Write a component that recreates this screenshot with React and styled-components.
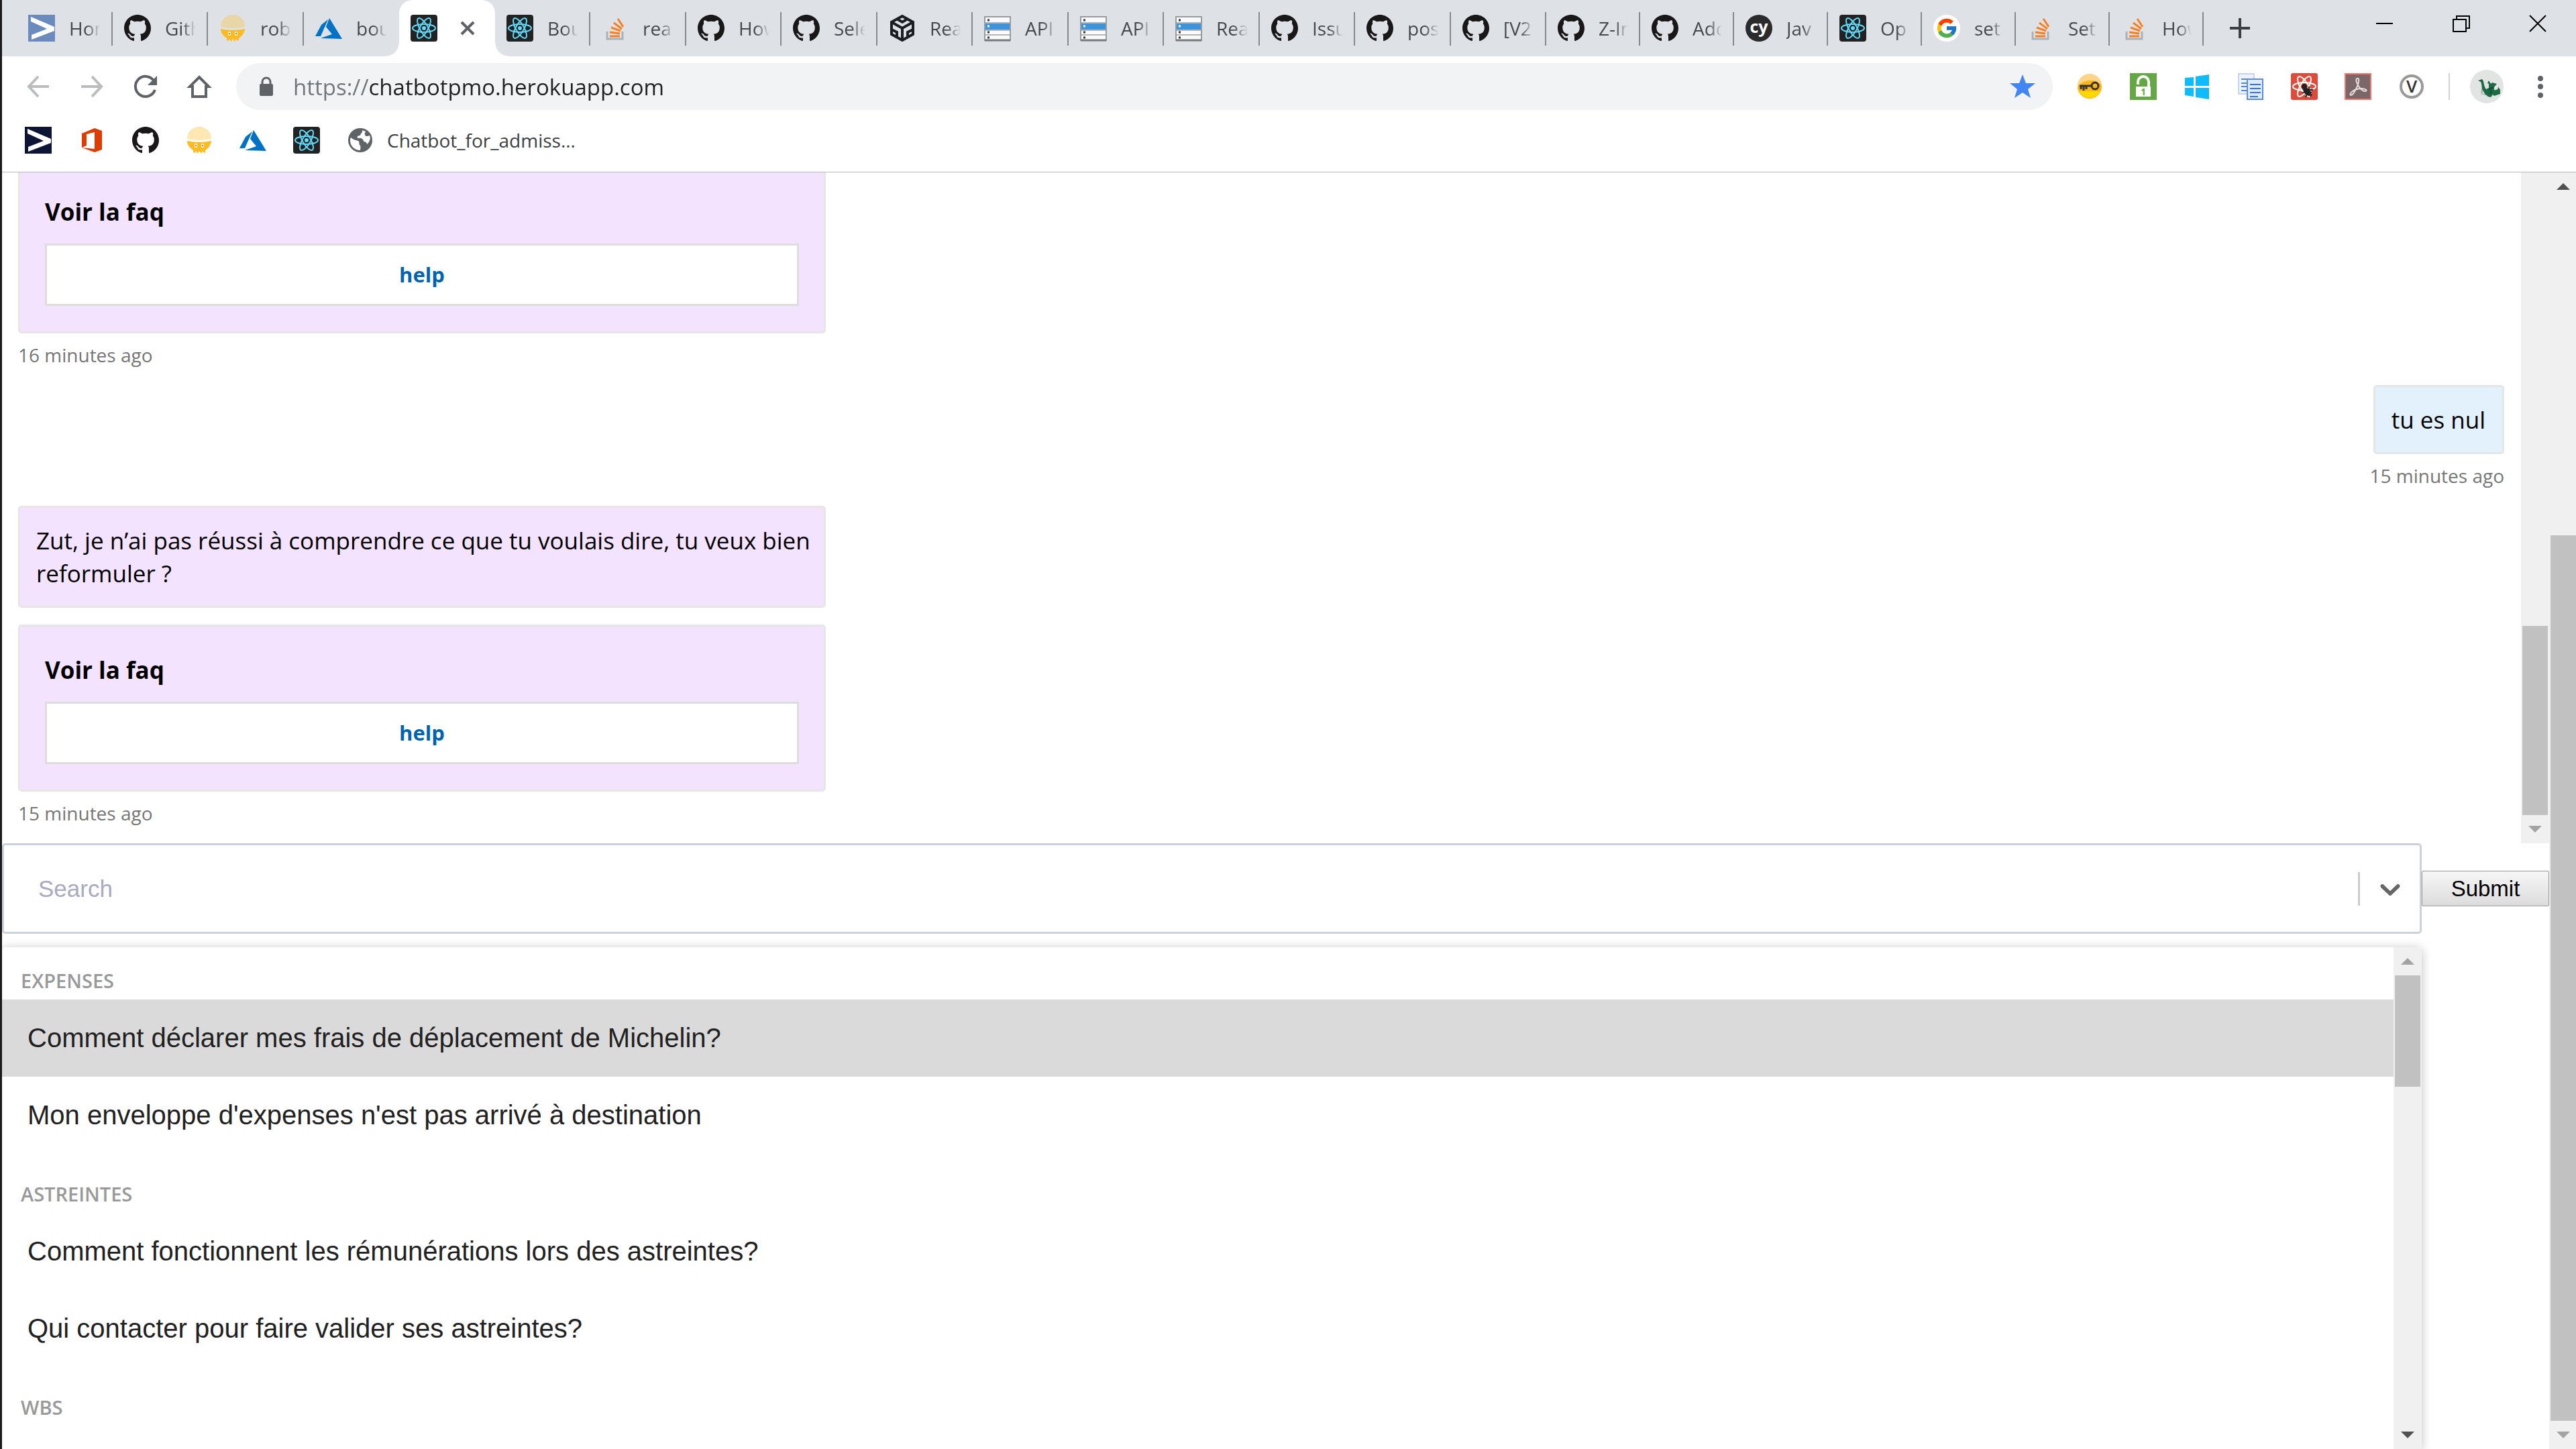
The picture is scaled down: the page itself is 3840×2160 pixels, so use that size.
import { useState } from 'react';
import styled, { createGlobalStyle, css } from 'styled-components';
import { FcGoogle } from 'react-icons/fc';

const GlobalStyle = createGlobalStyle`
  * {
    box-sizing: border-box;
  }
  body {
    margin: 0;
    background: #fff;
    font-family: 'Open Sans', 'Noto Sans', sans-serif;
  }
  button {
    border: 0;
    padding: 0;
    background: none;
    font: inherit;
    color: inherit;
  }
  svg {
    display: block;
    flex: none;
  }
`;

// ---------- icons ----------
const Svg = ({ box = 40, size = 40, children, ...rest }) => (
  <svg width={size} height={size} viewBox={`0 0 ${box} ${box}`} fill='none' aria-hidden='true' {...rest}>
    {children}
  </svg>
);

const ChevronLogo = ({ color = '#6b8bbf' }) => (
  <Svg>
    <rect width='40' height='40' fill={color} />
    <path d='M4 3 L39 18 V24 L5 37 V30 L28 21 L4 10 Z' fill='#fff' />
  </Svg>
);

const GithubIcon = () => (
  <Svg box={16}>
    <path
      fill='#191717'
      d='M8 0C3.58 0 0 3.58 0 8c0 3.54 2.29 6.53 5.47 7.59.4.07.55-.17.55-.38 0-.19-.01-.82-.01-1.49-2.01.37-2.53-.49-2.69-.94-.09-.23-.48-.94-.82-1.13-.28-.15-.68-.52-.01-.53.63-.01 1.08.58 1.23.82.72 1.21 1.87.87 2.33.66.07-.52.28-.87.51-1.07-1.78-.2-3.64-.89-3.64-3.95 0-.87.31-1.59.82-2.15-.08-.2-.36-1.02.08-2.12 0 0 .67-.21 2.2.82.64-.18 1.32-.27 2-.27.68 0 1.36.09 2 .27 1.53-1.04 2.2-.82 2.2-.82.44 1.1.16 1.92.08 2.12.51.56.82 1.27.82 2.15 0 3.07-1.87 3.75-3.65 3.95.29.25.54.73.54 1.48 0 1.07-.01 1.93-.01 2.2 0 .21.15.46.55.38A8.013 8.013 0 0016 8c0-4.42-3.58-8-8-8z'
    />
  </Svg>
);

const RobotIcon = ({ dome = '#e8d6a6' }) => (
  <Svg>
    <path d='M2 18 C2 7 10 0 20 0 S38 7 38 18 Q29 20 20 20 T2 18 Z' fill={dome} />
    <path
      d='M2 21 Q11 23 20 23 T38 21 C37 29 32 33 29 35 V38 L27 39 L25 36 L23 40 L20 36 L17 40 L15 36 L13 39 L11 38 V35 C7 32 2 28 2 21 Z'
      fill='#fdbb22'
    />
    <ellipse cx='15' cy='28' rx='2' ry='3' fill='#fff' />
    <ellipse cx='25' cy='28' rx='2' ry='3' fill='#fff' />
    <circle cx='15' cy='28' r='1' fill='#8a5a00' />
    <circle cx='25' cy='28' r='1' fill='#8a5a00' />
  </Svg>
);

const AzureIcon = () => (
  <Svg>
    <path d='M19 7 L9 15 L0 32 H8 Z' fill='#0072c6' />
    <path d='M21 5 L16 18 L25 29 L8 35 L40 36 Z' fill='#0072c6' />
  </Svg>
);

const Orbits = ({ color, width = 2 }) => (
  <g stroke={color} strokeWidth={width}>
    <ellipse cx='20' cy='20' rx='17' ry='6' />
    <ellipse cx='20' cy='20' rx='17' ry='6' transform='rotate(60 20 20)' />
    <ellipse cx='20' cy='20' rx='17' ry='6' transform='rotate(120 20 20)' />
  </g>
);

const ReactIcon = () => (
  <Svg>
    <rect width='40' height='40' rx='4' fill='#222' />
    <Orbits color='#61dafb' />
    <circle cx='20' cy='20' r='3' fill='#61dafb' />
  </Svg>
);

const StackIcon = () => (
  <Svg>
    <path d='M8 25 V36 H31 V25' stroke='#adb1b6' strokeWidth='3' />
    <g stroke='#f48024' strokeWidth='3'>
      <path d='M12 32 H27' />
      <path d='M12 26 L27 28' />
      <path d='M14 19 L28 24' />
      <path d='M18 12 L30 21' />
      <path d='M24 6 L32 18' />
    </g>
  </Svg>
);

// cube with its three faces cut out
const SandboxIcon = () => (
  <Svg>
    <path d='M20 2 L36 11 V29 L20 38 L4 29 V11 Z' stroke='#1b1f23' strokeWidth='4' />
    <path d='M4 11 L20 20 L36 11 M20 20 V38 M12 6 L20 11 L28 6 M4 22 L12 26 V34 M36 22 L28 26 V34' stroke='#1b1f23' strokeWidth='4' />
  </Svg>
);

const ServerIcon = () => (
  <Svg>
    <rect x='1' y='3' width='38' height='35' fill='#fafafa' stroke='#9a9ba0' strokeWidth='2' />
    <rect x='2' y='13' width='36' height='9' fill='#3b94dc' />
    <path d='M2 12 H38 M2 23 H38 M2 30 H38' stroke='#b5b5b8' strokeWidth='2' />
    <path d='M1 38 H39' stroke='#77787c' strokeWidth='3' />
    <path d='M5 8 H8 M5 26 H8 M5 34 H8' stroke='#333' strokeWidth='3' />
    <path d='M5 17 H8' stroke='#fff' strokeWidth='3' />
  </Svg>
);

const CypressIcon = () => (
  <Svg>
    <circle cx='20' cy='20' r='20' fill='#2b2b2c' />
    <text x='20' y='27' fontFamily='Open Sans, sans-serif' fontWeight='700' fontSize='25' textAnchor='middle' fill='#fff'>
      cy
    </text>
  </Svg>
);

const GoogleIcon = () => (
  <GoogleBadge>
    <FcGoogle size={34} />
  </GoogleBadge>
);

const OfficeIcon = () => (
  <Svg>
    <path d='M5 10 L24 2 L35 6 V34 L24 38 L5 31 L24 33 V8 L12 11 V28 L5 31 Z' fill='#e03c00' />
  </Svg>
);

const GlobeIcon = () => (
  <Svg>
    <circle cx='20' cy='20' r='18' fill='#5f6368' />
    <path
      d='M6 16 C10 20 15 20 17 21 C20 23 17 26 20 28 C21 30 20 33 20 35 C11 35 4 28 5 18 Z M23 5 C24 9 20 10 20 13 C16 13 15 15 16 17 C21 16 25 18 25 22 C28 22 30 24 30 26 C34 23 36 17 34 13 C31 14 28 15 27 12 C26 9 28 8 28 7 Z'
      fill='#fff'
    />
  </Svg>
);

const stroke = (color, width = 4) => ({ stroke: color, strokeWidth: width });

const BackIcon = () => (
  <Svg>
    <path d='M36 20 H7 M20 5 L6 20 L20 35' {...stroke('#babcbe')} />
  </Svg>
);
const ForwardIcon = () => (
  <Svg>
    <path d='M4 20 H33 M20 5 L34 20 L20 35' {...stroke('#babcbe')} />
  </Svg>
);
const ReloadIcon = () => (
  <Svg>
    <path d='M32 11 A15 15 0 1 0 34 25' {...stroke('#5f6368')} />
    <path d='M37 4 V18 H23 Z' fill='#5f6368' />
  </Svg>
);
const HomeIcon = () => (
  <Svg>
    <path d='M20 6 L34 20 H30 V35 H10 V20 H6 Z' {...stroke('#5f6368')} />
  </Svg>
);
const LockIcon = () => (
  <Svg>
    <rect x='10' y='16' width='20' height='18' rx='2' fill='#5f6368' />
    <path d='M14 17 V13 A6 6 0 0 1 26 13 V17' {...stroke('#5f6368', 3)} />
  </Svg>
);
const StarIcon = () => (
  <Svg>
    <path d='M20 2 L25 15 L39 15 L28 24 L32 37 L20 29 L8 37 L12 24 L1 15 L15 15 Z' fill='#4285f4' />
  </Svg>
);

const KeyIcon = () => (
  <Svg>
    <circle cx='20' cy='20' r='18' fill='#fbb615' />
    <path d='M2 20 A18 18 0 0 1 38 18 C30 8 12 8 2 20 Z' fill='#fdd58a' />
    <path d='M4 27 H36 A18 18 0 0 1 4 27 Z' fill='#ffd800' />
    <circle cx='28' cy='19' r='5' {...stroke('#333', 3)} />
    <path d='M23 19 H5 M7 19 V24 M11 19 V26 M15 19 V24' {...stroke('#333', 3)} />
  </Svg>
);
const GreenLockIcon = () => (
  <Svg>
    <rect width='40' height='40' fill='#63a844' />
    <path d='M12 17 V13 A8 8 0 0 1 28 13 V21' {...stroke('#fff')} />
    <rect x='9' y='20' width='22' height='15' fill='#fff' />
    <text x='20' y='33' fontFamily='Open Sans, sans-serif' fontWeight='700' fontSize='14' textAnchor='middle' fill='#63a844'>
      1
    </text>
  </Svg>
);
const WindowsIcon = () => (
  <Svg>
    <path d='M2 7 L15 6 V19 H2 Z M18 5 L38 2 V19 H18 Z M2 22 H15 V35 L2 33 Z M18 22 H38 V39 L18 36 Z' fill='#0fbcf9' />
  </Svg>
);
const PagesIcon = () => (
  <Svg>
    <rect x='2' y='1' width='23' height='30' fill='#eef4ff' stroke='#8fb0e6' />
    <path d='M6 9 H18 M6 15 H16 M6 20 H15 M6 26 H15' {...stroke('#4d87d6', 2)} />
    <rect x='15' y='9' width='23' height='30' fill='#dfeaff' stroke='#5b8ce0' strokeWidth='2' />
    <path d='M19 17 H35 M19 23 H35 M19 29 H35 M19 35 H31' {...stroke('#3576d0', 2)} />
  </Svg>
);
const ReactBugIcon = () => (
  <Svg>
    <rect width='40' height='40' rx='3' fill='#de4b3a' />
    <Orbits color='#fff' />
    <circle cx='20' cy='20' r='4' fill='#222' />
    <path d='M19 25 L24 23 L30 29 L27 33 L22 31 Z M17 30 L22 27 M22 36 L24 31 M27 20 V26 M33 25 H28 M29 35 L31 31' fill='#222' stroke='#222' strokeWidth='2' />
  </Svg>
);
const AcrobatIcon = () => (
  <Svg>
    <rect x='1' y='1' width='38' height='38' fill='#7b6668' stroke='#f4756c' strokeWidth='2' />
    <path
      d='M20 8 C16 7 17 13 20 18 C23 23 27 27 31 27 C35 26 31 23 25 23 C18 23 12 26 9 30 C7 34 11 34 14 29 C18 23 22 14 21 9 C21 8 20 8 20 8 Z'
      {...stroke('#e4dfdf', 2)}
    />
  </Svg>
);
const VIcon = () => (
  <Svg>
    <circle cx='20' cy='20' r='16' {...stroke('#999')} />
    <text x='20' y='29' fontFamily='Open Sans, sans-serif' fontWeight='600' fontSize='26' textAnchor='middle' fill='#333'>
      V
    </text>
  </Svg>
);
const DragonAvatar = () => (
  <Svg box={50} size={50}>
    <circle cx='25' cy='25' r='25' fill='#e2e4e3' />
    <path d='M17 26 C21 27 20 33 18 35 L26 38 L18 37 C14 34 18 30 17 26 Z' fill='#a9b5b0' />
    <path
      d='M12 16 L18 14 C21 16 20 24 24 29 L28 27 L28 21 L26 20 L28 16 L31 21 L33 19 L40 21 L36 26 L36 30 C40 31 43 28 42 25 L45 30 V36 L36 39 L34 37 L31 41 L27 40 L22 36 L20 32 C17 28 18 22 16 18 Z'
      fill='#1d6b45'
    />
    <path d='M28 30 L34 26 M30 36 L32 31' {...stroke('#0f4a30', 2)} />
  </Svg>
);
const MenuDots = () => (
  <Svg>
    <g fill='#5f6368'>
      <circle cx='20' cy='8' r='4' />
      <circle cx='20' cy='20' r='4' />
      <circle cx='20' cy='33' r='4' />
    </g>
  </Svg>
);

// ---------- data ----------
const tabs = [
  { title: 'Hom', icon: <ChevronLogo /> },
  { title: 'Gith', icon: <GithubIcon /> },
  { title: 'rob', icon: <RobotIcon /> },
  { title: 'bou', icon: <AzureIcon />, last: true },
  { title: '', icon: <ReactIcon />, active: true },
  { title: 'Bou', icon: <ReactIcon /> },
  { title: 'rea', icon: <StackIcon /> },
  { title: 'How', icon: <GithubIcon /> },
  { title: 'Sele', icon: <GithubIcon /> },
  { title: 'Rea', icon: <SandboxIcon /> },
  { title: 'API', icon: <ServerIcon /> },
  { title: 'API', icon: <ServerIcon /> },
  { title: 'Rea', icon: <ServerIcon /> },
  { title: 'Issu', icon: <GithubIcon /> },
  { title: 'pos', icon: <GithubIcon /> },
  { title: '[V2', icon: <GithubIcon /> },
  { title: 'Z-In', icon: <GithubIcon /> },
  { title: 'Add', icon: <GithubIcon /> },
  { title: 'Jav', icon: <CypressIcon /> },
  { title: 'Op', icon: <ReactIcon /> },
  { title: 'set', icon: <GoogleIcon /> },
  { title: 'Set', icon: <StackIcon /> },
  { title: 'How', icon: <StackIcon /> },
];

const bookmarks = [
  { name: 'Accueil', icon: <ChevronLogo color='#0d1537' /> },
  { name: 'Office', icon: <OfficeIcon /> },
  { name: 'GitHub', icon: <GithubIcon /> },
  { name: 'Robot', icon: <RobotIcon dome='#fee7b3' /> },
  { name: 'Azure', icon: <AzureIcon /> },
  { name: 'React', icon: <ReactIcon /> },
];

const extensions = [
  { name: 'Key', icon: <KeyIcon /> },
  { name: 'Password', icon: <GreenLockIcon /> },
  { name: 'Windows', icon: <WindowsIcon /> },
  { name: 'Pages', icon: <PagesIcon /> },
  { name: 'React tools', icon: <ReactBugIcon /> },
  { name: 'Acrobat', icon: <AcrobatIcon /> },
  { name: 'V', icon: <VIcon /> },
];

const groups = [
  {
    label: 'EXPENSES',
    options: ['Comment déclarer mes frais de déplacement de Michelin?', "Mon enveloppe d'expenses n'est pas arrivé à destination"],
  },
  {
    label: 'ASTREINTES',
    options: ['Comment fonctionnent les rémunérations lors des astreintes?', 'Qui contacter pour faire valider ses astreintes?'],
  },
  { label: 'WBS', options: [] },
];

// ---------- components ----------
function Scrollbar({ before, thumb, after, top = 'none', bottom }) {
  return (
    <Track>
      {top !== 'none' && (
        <ArrowBox>
          <Arrow $up $dark={top === 'dark'} />
        </ArrowBox>
      )}
      <Space $grow={before} />
      <Thumb $grow={thumb} />
      <Space $grow={after} />
      <ArrowBox>
        <Arrow $dark={bottom === 'dark'} />
      </ArrowBox>
    </Track>
  );
}

function Browser() {
  return (
    <header>
      <TabStrip>
        <TabList role='tablist'>
          {tabs.map((tab, index) => (
            <Tab key={index} role='tab' aria-selected={!!tab.active} $active={tab.active} $last={tab.last}>
              {tab.icon}
              {tab.active ? (
                <TabClose>
                  <Svg box={22} size={22}>
                    <path d='M2 2 L20 20 M20 2 L2 20' {...stroke('#5f6368')} />
                  </Svg>
                </TabClose>
              ) : (
                <TabTitle>{tab.title}</TabTitle>
              )}
            </Tab>
          ))}
        </TabList>
        <NewTab aria-label='Nouvel onglet'>
          <Svg box={30} size={30}>
            <path d='M15 0 V30 M0 15 H30' {...stroke('#3c4043')} />
          </Svg>
        </NewTab>
        <WindowButtons>
          <WindowButton aria-label='Réduire'>
            <Svg box={26} size={26}>
              <path d='M0 13 H25' {...stroke('#000', 2)} />
            </Svg>
          </WindowButton>
          <WindowButton aria-label='Restaurer'>
            <Svg box={26} size={26}>
              <path d='M1 7 H20 V25 H1 Z M6 7 V2 H25 V20 H20' {...stroke('#000', 2)} />
            </Svg>
          </WindowButton>
          <WindowButton aria-label='Fermer'>
            <Svg box={26} size={26}>
              <path d='M1 1 L25 25 M25 1 L1 25' {...stroke('#000', 2)} />
            </Svg>
          </WindowButton>
        </WindowButtons>
      </TabStrip>

      <Toolbar>
        <IconRow>
          <IconButton aria-label='Retour'><BackIcon /></IconButton>
          <IconButton aria-label='Avancer'><ForwardIcon /></IconButton>
          <IconButton aria-label='Actualiser'><ReloadIcon /></IconButton>
          <IconButton aria-label='Accueil'><HomeIcon /></IconButton>
        </IconRow>
        <AddressBar>
          <LockIcon />
          <Address aria-label='Adresse' defaultValue='https://chatbotpmo.herokuapp.com' />
          <IconButton aria-label='Favori'><StarIcon /></IconButton>
        </AddressBar>
        <IconRow>
          {extensions.map((ext) => (
            <IconButton key={ext.name} aria-label={ext.name}>{ext.icon}</IconButton>
          ))}
        </IconRow>
        <Profile>
          <IconButton aria-label='Profil'><DragonAvatar /></IconButton>
          <IconButton aria-label='Menu'><MenuDots /></IconButton>
        </Profile>
      </Toolbar>

      <Bookmarks>
        {bookmarks.map((item) => (
          <Bookmark key={item.name} href='#' aria-label={item.name}>{item.icon}</Bookmark>
        ))}
        <Bookmark href='#'>
          <GlobeIcon />
          Chatbot_for_admiss...
        </Bookmark>
      </Bookmarks>
    </header>
  );
}

function FaqCard() {
  return (
    <Card>
      <CardTitle>Voir la faq</CardTitle>
      <CardButton>help</CardButton>
    </Card>
  );
}

function Chat() {
  return (
    <ChatPanel>
      <Messages>
        <Message>
          <FaqCard />
          <Time>16 minutes ago</Time>
        </Message>
        <Message $mine>
          <Bubble $mine>tu es nul</Bubble>
          <Time>15 minutes ago</Time>
        </Message>
        <Message>
          <Stack>
            <Bubble>Zut, je n’ai pas réussi à comprendre ce que tu voulais dire, tu veux bien reformuler ?</Bubble>
            <FaqCard />
          </Stack>
          <Time>15 minutes ago</Time>
        </Message>
      </Messages>
      <Scrollbar before={676} thumb={282} after={0} />
    </ChatPanel>
  );
}

function Faq() {
  const [search, setSearch] = useState('');
  const [focused, setFocused] = useState(groups[0].options[0]);

  return (
    <Form onSubmit={(e) => e.preventDefault()}>
      <Control>
        <SearchInput aria-label='Search' placeholder='Search' value={search} onChange={(e) => setSearch(e.target.value)} />
        <Separator />
        <DropButton type='button' aria-label='Ouvrir'>
          <Svg box={20} size={50}>
            <path
              fill='#666'
              d='M4.516 7.548c0.436-0.446 1.043-0.481 1.576 0l3.908 3.747 3.908-3.747c0.533-0.481 1.141-0.446 1.574 0 0.436 0.445 0.408 1.197 0 1.615-0.406 0.418-4.695 4.502-4.695 4.502-0.217 0.223-0.502 0.335-0.787 0.335s-0.57-0.112-0.789-0.335c0 0-4.287-4.084-4.695-4.502s-0.436-1.17 0-1.615z'
            />
          </Svg>
        </DropButton>
      </Control>
      <Submit type='submit'>Submit</Submit>
      <Menu>
        <MenuList>
          {groups.map((group) => (
            <Group key={group.label}>
              <GroupLabel>{group.label}</GroupLabel>
              {group.options.map((option) => (
                <Option type='button' key={option} $focused={option === focused} onMouseEnter={() => setFocused(option)}>
                  {option}
                </Option>
              ))}
            </Group>
          ))}
        </MenuList>
        <Scrollbar top='light' before={0} thumb={166} after={498} bottom='dark' />
      </Menu>
    </Form>
  );
}

function App() {
  return (
    <Window>
      <GlobalStyle />
      <Browser />
      <Page>
        <Main>
          <Chat />
          <Faq />
        </Main>
        <Scrollbar top='dark' before={499} thumb={1320} after={0} />
      </Page>
    </Window>
  );
}

// ---------- styles ----------
const Window = styled.div`
  display: flex;
  flex-direction: column;
  height: 100vh;
  border-left: 3px solid #1c1c1e;
  overflow: hidden;
`;

const GoogleBadge = styled.span`
  display: flex;
  flex: none;
  align-items: center;
  justify-content: center;
  width: 40px;
  height: 40px;
  border-radius: 50%;
  background: #fff;
`;

const TabStrip = styled.div`
  display: flex;
  height: 84px;
  padding-left: 22px;
  background: #dee1e6;
`;

const TabList = styled.div`
  display: flex;
`;

const Tab = styled.button`
  position: relative;
  display: flex;
  align-items: center;
  gap: 21px;
  width: 143px;
  padding: 0 18px 0 17px;
  color: #45494d;
  font-size: 28px;

  &:nth-child(even) {
    width: 142px;
  }
  &:nth-child(n + 17) {
    width: 140px;
  }

  ${(props) =>
    !props.$active &&
    !props.$last &&
    css`
      &::after {
        content: '';
        position: absolute;
        right: 0;
        top: 18px;
        width: 2px;
        height: 50px;
        background: #868a8f;
      }
    `}

  ${(props) =>
    props.$active &&
    css`
      background: #fff;
      border-radius: 20px 20px 0 0;

      &::before,
      &::after {
        content: '';
        position: absolute;
        bottom: 0;
        width: 20px;
        height: 20px;
      }
      &::before {
        right: 100%;
        background: radial-gradient(circle at 0 0, transparent 19px, #fff 20px);
      }
      &::after {
        left: 100%;
        background: radial-gradient(circle at 100% 0, transparent 19px, #fff 20px);
      }
    `}
`;

const TabTitle = styled.span`
  flex: 1;
  min-width: 0;
  overflow: hidden;
  text-align: left;
  white-space: nowrap;
  mask-image: linear-gradient(to right, #000 55%, transparent);
`;

const TabClose = styled.span`
  display: flex;
  flex: 1;
  justify-content: center;
`;

const NewTab = styled.button`
  display: flex;
  align-items: center;
  padding: 0 39px;
`;

const WindowButtons = styled.div`
  display: flex;
  align-items: flex-start;
  margin-left: auto;
`;

const WindowButton = styled.button`
  display: flex;
  align-items: center;
  justify-content: center;
  width: 114px;
  height: 70px;
`;

const Toolbar = styled.div`
  display: flex;
  align-items: center;
  gap: 35px;
  height: 90px;
  padding: 0 33px 0 34px;
`;

const IconRow = styled.div`
  display: flex;
  gap: 40px;
`;

const IconButton = styled.button`
  display: flex;
`;

const AddressBar = styled.div`
  display: flex;
  flex: 1;
  align-items: center;
  height: 70px;
  padding: 0 25px;
  border-radius: 35px;
  background: #f1f3f4;
`;

/* the scheme is painted lighter than the host name */
const Address = styled.input`
  flex: 1;
  margin-left: 20px;
  border: 0;
  padding: 0;
  outline: 0;
  font: 33px 'Open Sans', 'Noto Sans', sans-serif;
  color: transparent;
  background: linear-gradient(to right, #70757a 113px, #202124 113px);
  background-clip: text;
  -webkit-background-clip: text;
`;

const Profile = styled(IconRow)`
  align-items: center;
  gap: 35px;
  height: 40px;
  padding-left: 30px;
  border-left: 2px solid #d0d2d4;
`;

const Bookmarks = styled.nav`
  display: flex;
  gap: 40px;
  height: 83px;
  padding: 0 34px 12px;
  border-bottom: 1px solid #b5b6b7;
`;

const Bookmark = styled.a`
  display: flex;
  align-items: center;
  gap: 20px;
  color: #3c4043;
  font-size: 28px;
  text-decoration: none;
`;

const Page = styled.div`
  display: flex;
  flex: 1;
  min-height: 0;
`;

const Main = styled.main`
  display: flex;
  flex: 1;
  flex-direction: column;
  min-width: 0;
`;

const Track = styled.div`
  display: flex;
  flex: none;
  flex-direction: column;
  width: 42px;
  padding: 0 2px;
  background: #f0f0f0;

  ${Page} > & {
    width: 40px;
    padding-right: 0;
  }
`;

const ArrowBox = styled.div`
  display: flex;
  flex: none;
  align-items: center;
  justify-content: center;
  height: 42px;
`;

const Arrow = styled.i`
  border: 10px solid transparent;
  border-top-width: ${(props) => (props.$up ? 0 : 10)}px;
  border-bottom-width: ${(props) => (props.$up ? 10 : 0)}px;
  border-${(props) => (props.$up ? 'bottom' : 'top')}-color: ${(props) => (props.$dark ? '#505050' : '#a3a3a3')};
`;

const Space = styled.div`
  flex: ${(props) => props.$grow} 1 0;
`;

const Thumb = styled(Space)`
  background: #c1c1c1;
`;

const ChatPanel = styled.section`
  display: flex;
  flex: none;
  height: 1000px;
`;

const Messages = styled.div`
  display: flex;
  flex: 1;
  flex-direction: column;
  justify-content: flex-end;
  gap: 25px;
  padding: 0 25px 25px 24px;
  overflow: hidden;
`;

const Message = styled.div`
  display: flex;
  flex: none;
  flex-direction: column;
  gap: 12px;
  align-items: ${(props) => (props.$mine ? 'flex-end' : 'flex-start')};
`;

const Stack = styled.div`
  display: flex;
  flex-direction: column;
  gap: 25px;
`;

const Bubble = styled.div`
  max-width: 1204px;
  padding: 24px ${(props) => (props.$mine ? 25 : 20)}px 24px 24px;
  border: 3px solid #e6e6e6;
  border-radius: 5px;
  background: ${(props) => (props.$mine ? '#e3f1fd' : '#f4e3ff')};
  color: #000;
  font-size: 35px;
  line-height: 49px;
`;

const Card = styled(Bubble)`
  display: flex;
  flex-direction: column;
  gap: 23px;
  width: 1204px;
  padding: 40px 37px 38px;
`;

const CardTitle = styled.strong`
  font-weight: 700;
`;

const CardButton = styled.button`
  height: 93px;
  border: 3px solid #ddd;
  background: #fff;
  color: #0063b1;
  font-size: 31px;
  font-weight: 700;
`;

const Time = styled.time`
  color: #767676;
  font-size: 28px;
  line-height: 40px;
`;

const Form = styled.form`
  display: grid;
  flex: 1;
  grid-template-columns: 1fr 190px;
  grid-template-rows: 135px minmax(0, 1fr);
  row-gap: 20px;
  min-height: 0;
  font-family: 'Liberation Sans', Arial, sans-serif;
`;

const Control = styled.div`
  display: flex;
  align-items: center;
  border: 3px solid #cdd2da;
  border-radius: 5px;
`;

const SearchInput = styled.input`
  flex: 1;
  height: 80px;
  padding: 0 0 0 51px;
  border: 0;
  outline: 0;
  font: 35px 'Liberation Sans', Arial, sans-serif;

  &::placeholder {
    color: #a9aabf;
  }
`;

const Separator = styled.span`
  width: 3px;
  height: 50px;
  background: #ccc;
`;

const DropButton = styled.button`
  padding: 0 19px 0 20px;
`;

const Submit = styled.button`
  align-self: center;
  height: 53px;
  border: 1px solid #999;
  border-radius: 2px;
  background: linear-gradient(#f6f6f6, #dcdcdc);
  color: #000;
  font-size: 33px;
`;

const Menu = styled.div`
  display: flex;
  border-radius: 5px 5px 0 0;
  box-shadow: 0 2px 15px rgba(0, 0, 0, 0.25);
  overflow: hidden;
`;

const MenuList = styled.div`
  flex: 1;
  padding-top: 10px;
  overflow: hidden;
`;

const Group = styled.div`
  padding: 20px 0;

  & + & {
    padding-top: 0;
    margin-top: 20px;
  }
`;

const GroupLabel = styled.div`
  height: 48px;
  padding-left: 28px;
  color: #999;
  font: 600 29px/40px 'Open Sans', 'Noto Sans', sans-serif;
`;

const Option = styled.button`
  display: block;
  width: 100%;
  height: 115px;
  padding: 0 38px;
  background: ${(props) => (props.$focused ? '#dadada' : 'transparent')};
  color: #212121;
  font-size: 40px;
  text-align: left;
`;

export default App;
